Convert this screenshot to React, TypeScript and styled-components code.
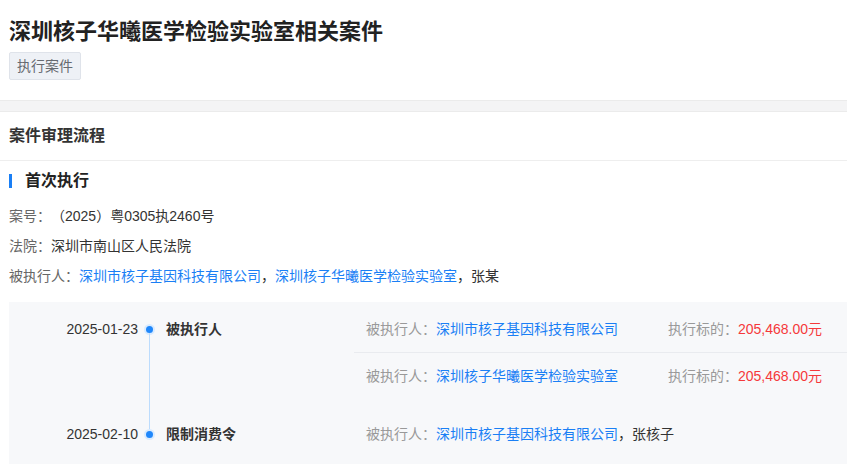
import React from "react";
import styled, { createGlobalStyle } from "styled-components";

const GlobalStyle = createGlobalStyle`
  html, body { margin: 0; padding: 0; background: #ffffff; }
  body {
    font-family: "Liberation Sans", "Noto Sans CJK SC", sans-serif;
    color: #333333;
    font-size: 14px;
    text-spacing-trim: space-all;
  }
  * { box-sizing: border-box; }
`;

const Page = styled.div`
  width: 847px;
  min-height: 465px;
  overflow: hidden;
  background: #ffffff;
`;

const Header = styled.header`
  padding: 17px 9px 20px;
  display: flex;
  flex-direction: column;
  align-items: flex-start;
  gap: 5px;
`;

const Title = styled.h1`
  margin: 0;
  font-size: 22px;
  line-height: 30px;
  font-weight: 700;
  color: #222222;
`;

const Tag = styled.span`
  display: inline-block;
  height: 28px;
  line-height: 26px;
  padding: 0 7px;
  font-size: 14px;
  color: #666a70;
  background: #eef1f6;
  border: 1px solid #dfe3ea;
  border-radius: 2px;
`;

const Band = styled.div`
  height: 12px;
  background: #f4f4f5;
  border-top: 1px solid #ebebeb;
  border-bottom: 1px solid #ebebeb;
`;

const SectionHeader = styled.h2`
  margin: 0;
  height: 49px;
  line-height: 48px;
  padding: 0 9px;
  font-size: 16px;
  font-weight: 700;
  color: #333333;
  border-bottom: 1px solid #eeeeee;
`;

const SubHeader = styled.h3`
  margin: 0;
  padding: 8px 9px 8px;
  display: flex;
  align-items: center;
  gap: 13px;
  font-size: 16px;
  line-height: 24px;
  font-weight: 700;
  color: #222222;
  &::before {
    content: "";
    width: 3px;
    height: 14px;
    background: #1a7ff5;
  }
`;

const InfoList = styled.div`
  padding: 0 9px;
`;

const InfoRow = styled.div`
  line-height: 30px;
  font-size: 14px;
  color: #333333;
`;

const Label = styled.span<{ $muted?: boolean }>`
  color: ${(p) => (p.$muted ? "#999999" : "#666666")};
`;

const Link = styled.span`
  color: #1a7ff5;
`;

const Plain = styled.span`
  color: #333333;
`;

const Amount = styled.span`
  color: #f5383b;
`;

const Panel = styled.div`
  margin: 11px 0 0 9px;
  padding: 4px 0 7px;
  background: #f7f8fa;
`;

const Item = styled.div`
  display: flex;
  align-items: stretch;
`;

const DateCol = styled.div<{ $lead: number }>`
  width: 129px;
  margin-top: ${(p) => p.$lead + 12}px;
  text-align: right;
  line-height: 22px;
  font-size: 14px;
  color: #333333;
`;

const Axis = styled.div`
  width: 11px;
  margin: 0 11px 0 6px;
  display: flex;
  flex-direction: column;
  align-items: center;
`;

const Seg = styled.div<{ $show: boolean; $h?: number }>`
  width: 1px;
  background: ${(p) => (p.$show ? "#bcdcfd" : "transparent")};
  ${(p) => (p.$h !== undefined ? `height: ${p.$h}px;` : "flex: 1;")}
`;

const Dot = styled.div`
  width: 7px;
  height: 7px;
  border-radius: 50%;
  background: #1f87fb;
  box-shadow: 0 0 0 2px #d9ebff;
  flex: none;
`;

const EventLabel = styled.div<{ $lead: number }>`
  width: 188px;
  margin-top: ${(p) => p.$lead + 12}px;
  line-height: 22px;
  font-size: 14px;
  font-weight: 700;
  color: #333333;
`;

const Entries = styled.div<{ $lead: number }>`
  flex: 1;
  margin-top: ${(p) => p.$lead}px;
  display: flex;
  flex-direction: column;
`;

const Entry = styled.div<{ $divided: boolean }>`
  display: grid;
  grid-template-columns: 302px auto;
  padding: 12px 12px 12px;
  line-height: 22px;
  font-size: 14px;
  border-top: ${(p) => (p.$divided ? "1px solid #e9ebef" : "none")};
`;

const Cell = styled.div`
  white-space: nowrap;
`;

type Party = { name: string; link: boolean };
type EntryData = { parties: Party[]; amount?: string };
type Event = { date: string; label: string; lead: number; entries: EntryData[] };

const events: Event[] = [
  {
    date: "2025-01-23",
    label: "被执行人",
    lead: 0,
    entries: [
      { parties: [{ name: "深圳市核子基因科技有限公司", link: true }], amount: "205,468.00元" },
      { parties: [{ name: "深圳核子华曦医学检验实验室", link: true }], amount: "205,468.00元" },
    ],
  },
  {
    date: "2025-02-10",
    label: "限制消费令",
    lead: 12,
    entries: [
      {
        parties: [
          { name: "深圳市核子基因科技有限公司", link: true },
          { name: "张核子", link: false },
        ],
      },
    ],
  },
];

const PartyList: React.FC<{ parties: Party[] }> = ({ parties }) => (
  <>
    {parties.map((p, i) => (
      <React.Fragment key={i}>
        {i > 0 && <Plain>，</Plain>}
        {p.link ? <Link>{p.name}</Link> : <Plain>{p.name}</Plain>}
      </React.Fragment>
    ))}
  </>
);

export default function App() {
  return (
    <Page>
      <GlobalStyle />
      <Header>
        <Title>深圳核子华曦医学检验实验室相关案件</Title>
        <Tag>执行案件</Tag>
      </Header>
      <Band />
      <SectionHeader>案件审理流程</SectionHeader>
      <SubHeader>首次执行</SubHeader>
      <InfoList>
        <InfoRow>
          <Label>案号：</Label>（2025）粤0305执2460号
        </InfoRow>
        <InfoRow>
          <Label>法院：</Label>深圳市南山区人民法院
        </InfoRow>
        <InfoRow>
          <Label>被执行人：</Label>
          <PartyList
            parties={[
              { name: "深圳市核子基因科技有限公司", link: true },
              { name: "深圳核子华曦医学检验实验室", link: true },
              { name: "张某", link: false },
            ]}
          />
        </InfoRow>
      </InfoList>
      <Panel>
        {events.map((ev, i) => (
          <Item key={ev.date}>
            <DateCol $lead={ev.lead}>{ev.date}</DateCol>
            <Axis>
              <Seg $show={i > 0} $h={ev.lead + 20} />
              <Dot />
              <Seg $show={i < events.length - 1} />
            </Axis>
            <EventLabel $lead={ev.lead}>{ev.label}</EventLabel>
            <Entries $lead={ev.lead}>
              {ev.entries.map((en, j) => (
                <Entry key={j} $divided={j > 0}>
                  <Cell>
                    <Label $muted>被执行人：</Label>
                    <PartyList parties={en.parties} />
                  </Cell>
                  {en.amount && (
                    <Cell>
                      <Label $muted>执行标的：</Label>
                      <Amount>{en.amount}</Amount>
                    </Cell>
                  )}
                </Entry>
              ))}
            </Entries>
          </Item>
        ))}
      </Panel>
    </Page>
  );
}
